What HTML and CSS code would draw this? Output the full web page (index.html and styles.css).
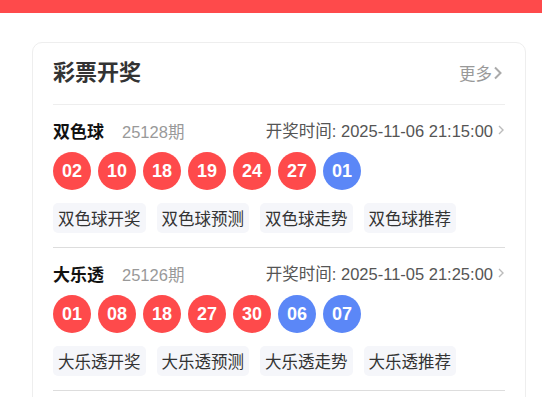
FILE: index.html
```html
<!DOCTYPE html>
<html lang="zh-CN">
<head>
<meta charset="utf-8">
<title>彩票开奖</title>
<link rel="stylesheet" href="styles.css">
</head>
<body>
<div class="topbar"></div>
<main class="page">
  <section class="card">
    <header class="card-head">
      <h2 class="card-title">彩票开奖</h2>
      <a class="more" href="#">更多<svg class="more-icon" width="10" height="14" viewBox="0 0 10 14"><path d="M2 1.5 L7.5 7 L2 12.5" fill="none" stroke="#aaa" stroke-width="2"/></svg></a>
    </header>

    <div class="lottery">
      <div class="lot-top">
        <div class="lot-name"><span class="name">双色球</span><span class="issue">25128期</span></div>
        <div class="lot-time">开奖时间: 2025-11-06 21:15:00<svg class="time-icon" width="8" height="10" viewBox="0 0 8 10"><path d="M2 1 L6 5 L2 9" fill="none" stroke="#bbb" stroke-width="1.4"/></svg></div>
      </div>
      <div class="balls">
        <span class="ball red">02</span>
        <span class="ball red">10</span>
        <span class="ball red">18</span>
        <span class="ball red">19</span>
        <span class="ball red">24</span>
        <span class="ball red">27</span>
        <span class="ball blue">01</span>
      </div>
      <div class="tags">
        <a class="tag" href="#">双色球开奖</a>
        <a class="tag" href="#">双色球预测</a>
        <a class="tag" href="#">双色球走势</a>
        <a class="tag" href="#">双色球推荐</a>
      </div>
    </div>

    <div class="lottery">
      <div class="lot-top">
        <div class="lot-name"><span class="name">大乐透</span><span class="issue">25126期</span></div>
        <div class="lot-time">开奖时间: 2025-11-05 21:25:00<svg class="time-icon" width="8" height="10" viewBox="0 0 8 10"><path d="M2 1 L6 5 L2 9" fill="none" stroke="#bbb" stroke-width="1.4"/></svg></div>
      </div>
      <div class="balls">
        <span class="ball red">01</span>
        <span class="ball red">08</span>
        <span class="ball red">18</span>
        <span class="ball red">27</span>
        <span class="ball red">30</span>
        <span class="ball blue">06</span>
        <span class="ball blue">07</span>
      </div>
      <div class="tags">
        <a class="tag" href="#">大乐透开奖</a>
        <a class="tag" href="#">大乐透预测</a>
        <a class="tag" href="#">大乐透走势</a>
        <a class="tag" href="#">大乐透推荐</a>
      </div>
    </div>
  </section>
</main>
</body>
</html>
```

FILE: styles.css
```css
* { box-sizing: border-box; }
html, body { margin: 0; padding: 0; background: #fff; }
body {
  font-family: "Liberation Sans", "Noto Sans CJK SC", Arial, sans-serif;
  color: #333;
}
.topbar { height: 13px; background: #fe4a4b; }
.page { padding: 29px 16px 0 32px; }
.card {
  width: 494px;
  border: 1px solid #eee;
  border-radius: 10px;
  padding: 0 20px;
  min-height: 400px;
}
.card-head {
  display: flex;
  align-items: center;
  justify-content: space-between;
  padding: 16px 0 17px;
  border-bottom: 1px solid #eee;
}
.card-title {
  margin: 0;
  font-size: 22px;
  line-height: 28px;
  font-weight: 700;
  color: #333;
}
.more {
  display: flex;
  align-items: center;
  font-size: 16.5px;
  color: #999;
  text-decoration: none;
  gap: 1px;
  margin-right: 2px;
}
.more-icon { display: block; }
.lottery {
  padding: 13px 0 14px;
  border-bottom: 1px solid #ddd;
}
.lot-top {
  display: flex;
  align-items: center;
  justify-content: space-between;
  height: 24px;
}
.lot-name { display: flex; align-items: baseline; }
.name { font-size: 17px; font-weight: 700; color: #111; }
.issue { font-size: 16.5px; color: #999; margin-left: 18px; }
.lot-time {
  display: flex;
  align-items: center;
  font-size: 16.5px;
  color: #555;
  gap: 4px;
}
.time-icon { display: block; }
.balls {
  display: flex;
  gap: 7px;
  margin-top: 10px;
}
.ball {
  width: 38px;
  height: 38px;
  border-radius: 50%;
  display: flex;
  align-items: center;
  justify-content: center;
  color: #fff;
  font-size: 18px;
  font-weight: 700;
}
.ball.red { background: #fe4a4b; }
.ball.blue { background: #5b87f7; }
.tags {
  display: flex;
  gap: 11px;
  margin-top: 13px;
}
.tag {
  height: 30px;
  display: flex;
  align-items: center;
  padding: 0 5px;
  border-radius: 5px;
  background: #f5f6fa;
  color: #333;
  font-size: 16.5px;
  text-decoration: none;
}
```
